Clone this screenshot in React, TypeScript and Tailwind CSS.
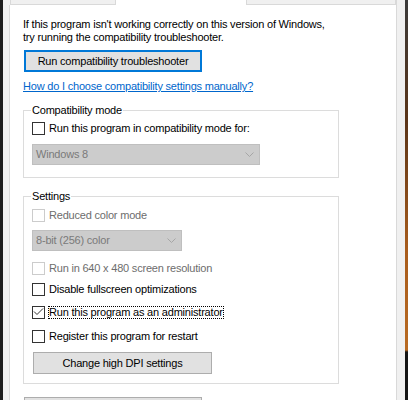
import React from 'react';

function Check({ checked, disabled }: { checked?: boolean; disabled?: boolean }) {
  return (
    <div
      className={`w-[13px] h-[13px] shrink-0 bg-white border ${
        disabled ? 'border-[#cccccc]' : 'border-[#333333]'
      }`}
    >
      {checked && (
        <svg width="11" height="11" viewBox="0 0 11 11" className="block">
          <polyline points="1,4.5 4,7.5 10,1.5" fill="none" stroke="#333333" strokeWidth="1" />
        </svg>
      )}
    </div>
  );
}

function Row({
  label,
  checked,
  disabled,
  focus,
  className,
}: {
  label: string;
  checked?: boolean;
  disabled?: boolean;
  focus?: boolean;
  className: string;
}) {
  return (
    <div className={`flex items-center h-[13px] gap-[3px] ${className}`}>
      <Check checked={checked} disabled={disabled} />
      <span
        className={`leading-[11px] border whitespace-nowrap ${
          focus ? 'border-dotted border-black' : 'border-transparent'
        } ${disabled ? 'text-[#6d6d6d]' : 'text-black'}`}
      >
        {label}
      </span>
    </div>
  );
}

function Combo({ text, className }: { text: string; className: string }) {
  return (
    <div
      className={`flex items-center justify-between h-[21px] border border-[#bfbfbf] bg-[#cccccc] pl-[3px] pr-[5px] ${className}`}
    >
      <span className="text-[#7a7a7a] leading-[13px] whitespace-nowrap">{text}</span>
      <svg width="9" height="5" viewBox="0 0 9 5" className="block">
        <polyline points="0.5,0.5 4.5,4.5 8.5,0.5" fill="none" stroke="#a6a6a6" strokeWidth="1" />
      </svg>
    </div>
  );
}

export default function App() {
  return (
    <div className="w-[408px] h-[400px] overflow-hidden flex bg-[#f0f0f0] font-['Liberation_Sans',Arial,sans-serif] text-[11px] tracking-[-0.2px] text-black">
      <div className="w-[3px] shrink-0 bg-[#1c1c1c]" />
      <div className="w-[6px] shrink-0" />
      <div className="w-[388px] shrink-0 flex flex-col">
        <div className="flex h-[5px] shrink-0">
          <div className="w-[1px]" />
          <div className="w-[106px] border-l border-r border-b border-[#d9d9d9] bg-[#f0f0f0]" />
          <div className="w-[130px] bg-white" />
          <div className="w-[150px] border-l border-r border-b border-[#d9d9d9] bg-[#f0f0f0]" />
          <div className="w-[1px] bg-[#d9d9d9]" />
        </div>
        <div className="flex-1 bg-white border-x border-[#d9d9d9] pl-[13px] pt-[13px] flex flex-col items-start">
          <p className="leading-[13px] whitespace-nowrap">
            If this program isn't working correctly on this version of Windows,
            <br />
            try running the compatibility troubleshooter.
          </p>
          <div className="ml-px mt-[6px] w-[178px] h-[22px] border-2 border-[#0078d7] bg-[#e1e1e1] flex items-center justify-center leading-[13px] whitespace-nowrap">
            Run compatibility troubleshooter
          </div>
          <div className="mt-[8px] leading-[13px] text-[#0066cc] underline whitespace-nowrap">
            How do I choose compatibility settings manually?
          </div>

          <fieldset className="mt-[11px] w-[316px] border border-[#dcdcdc] px-[8px] pb-[12px]">
            <legend className="-ml-px px-px leading-[13px] whitespace-nowrap">Compatibility mode</legend>
            <Row className="mt-[5px]" label="Run this program in compatibility mode for:" />
            <Combo className="mt-[9px] w-[228px]" text="Windows 8" />
          </fieldset>

          <fieldset className="mt-[12px] w-[316px] border border-[#dcdcdc] px-[8px] pb-[9px]">
            <legend className="-ml-px px-px leading-[13px] whitespace-nowrap">Settings</legend>
            <Row className="mt-[6px]" label="Reduced color mode" disabled />
            <Combo className="mt-[8px] w-[150px]" text="8-bit (256) color" />
            <Row className="mt-[11px]" label="Run in 640 x 480 screen resolution" disabled />
            <Row className="mt-[8px]" label="Disable fullscreen optimizations" />
            <Row className="mt-[10px]" label="Run this program as an administrator" checked focus />
            <Row className="mt-[11px]" label="Register this program for restart" />
            <div className="ml-px mt-[9px] w-[179px] h-[22px] border border-[#adadad] bg-[#e1e1e1] flex items-center justify-center leading-[13px] whitespace-nowrap">
              Change high DPI settings
            </div>
          </fieldset>

          <div className="ml-px mt-[13px] w-[178px] h-[22px] shrink-0 border border-[#adadad] bg-[#e1e1e1]" />
        </div>
      </div>
      <div className="w-[8px] shrink-0" />
      <div className="w-[3px] shrink-0 bg-[linear-gradient(to_bottom,#3a3a3a_0px,#5a3418_120px,#a85c1c_250px,#b86a22_350px,#141414_352px)]" />
    </div>
  );
}
